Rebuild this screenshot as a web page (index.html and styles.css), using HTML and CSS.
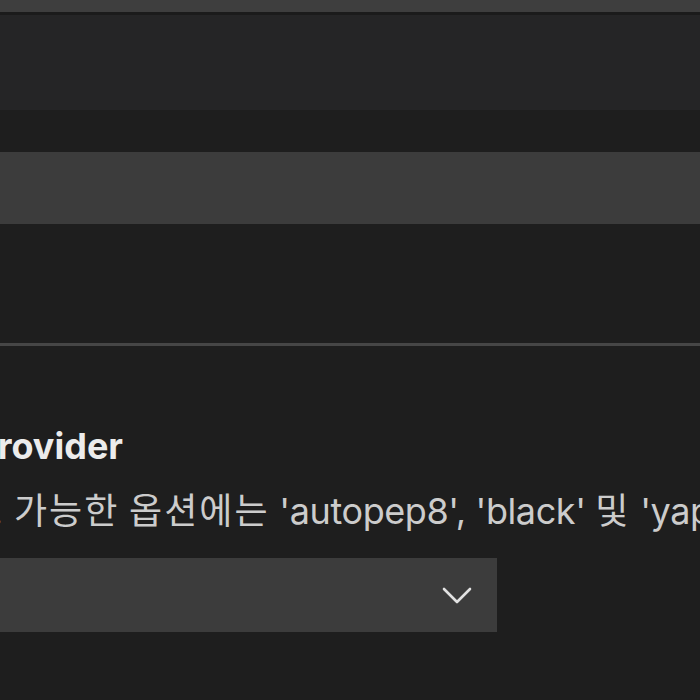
FILE: index.html
```html
<!DOCTYPE html>
<html lang="ko">
<head>
<meta charset="utf-8">
<title>Settings</title>
<link rel="stylesheet" href="styles.css">
</head>
<body>
<div class="page">
  <div class="tabbar"></div>
  <div class="tabsep"></div>
  <div class="header"></div>
  <div class="search-wrap">
    <div class="search"></div>
  </div>
  <div class="divider"></div>
  <div class="setting">
    <div class="title"><span class="title-text">Python › Formatting: Provider</span></div>
    <div class="desc">
      <div class="desc-lead"><span>서식 지정 공급자입니다.</span></div>
      <span class="desc-rest"><span class="ko">가능한</span> <span class="ko">옵션에는</span> 'autopep8', 'black' <span class="ko">및</span> 'yapf'<span class="ko">가</span> <span class="ko">포함됩니다.</span></span>
    </div>
    <div class="select">
      <span class="value"></span>
      <svg class="chev" width="30" height="17" viewBox="0 0 30 17"><path d="M2 2 L15 15 L28 2" fill="none" stroke="#e2e2e2" stroke-width="2.6" stroke-linecap="round" stroke-linejoin="round"/></svg>
    </div>
  </div>
</div>
</body>
</html>
```

FILE: styles.css
```css
html, body {
  margin: 0;
  padding: 0;
  background: #1e1e1e;
  overflow: hidden;
}
.page {
  width: 700px;
  height: 700px;
  overflow: hidden;
  display: flex;
  flex-direction: column;
  font-family: "Inter", "Noto Sans CJK KR", sans-serif;
}
.page > * {
  flex-shrink: 0;
}
.tabbar {
  height: 12px;
  background: #3e3e3e;
}
.tabsep {
  height: 3px;
  background: #1b1b1b;
}
.header {
  height: 95px;
  background: #252526;
}
.search-wrap {
  padding-top: 42px;
  height: 233px;
  box-sizing: border-box;
}
.search {
  height: 72px;
  background: #3c3c3c;
}
.divider {
  height: 3px;
  background: #464646;
}
.setting {
  padding-top: 76px;
  display: flex;
  flex-direction: column;
}
.title {
  width: 123px;
  height: 48px;
  display: flex;
  justify-content: flex-end;
  line-height: 48px;
  font-size: 36px;
  font-weight: 700;
  color: #ececec;
  white-space: nowrap;
}
.title-text {
  flex-shrink: 0;
}
.desc {
  margin-top: 17px;
  height: 48px;
  display: flex;
  line-height: 48px;
  font-size: 36px;
  color: #cccccc;
  white-space: nowrap;
}
.desc-lead {
  width: 3px;
  display: flex;
  justify-content: flex-end;
  flex-shrink: 0;
}
.desc-lead span {
  flex-shrink: 0;
}
.desc-rest {
  margin-left: 11px;
  flex-shrink: 0;
  letter-spacing: -0.4px;
}
.ko {
  letter-spacing: 2px;
}
.select {
  margin-top: 23px;
  width: 497px;
  height: 74px;
  background: #3c3c3c;
  display: flex;
  align-items: center;
  justify-content: flex-end;
  padding-right: 25px;
  box-sizing: border-box;
}
.chev {
  display: block;
}
```
